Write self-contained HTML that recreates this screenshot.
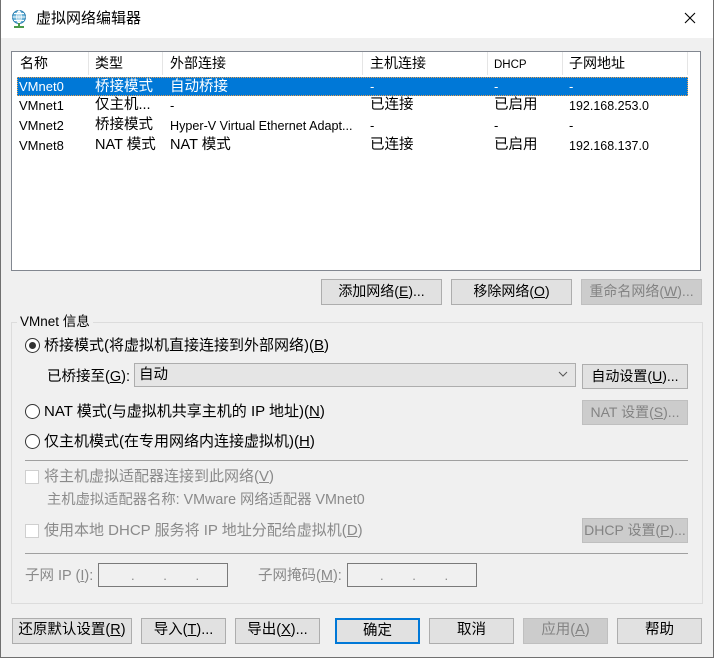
<!DOCTYPE html>
<html><head><meta charset="utf-8"><style>
*{box-sizing:border-box;margin:0;padding:0}
body{width:714px;height:658px;position:relative;overflow:hidden;background:#f0f0f0;font-family:"Liberation Sans","Noto Sans CJK SC",sans-serif;font-size:13px;color:#000}
.a{position:absolute;white-space:nowrap}
.btn{position:absolute;background:#e1e1e1;border:1px solid #adadad;text-align:center;font-size:13.5px;line-height:23px}
.dis{background:#cccccc;border-color:#bfbfbf;color:#838383}
.g{color:#8a8a8a}
.t{line-height:16px}
u{text-decoration:underline}
.radio{position:absolute;width:15px;height:15px;border:1px solid #333;border-radius:50%;background:#fff}
.chk{position:absolute;width:14px;height:14px;border:1px solid #cfcfcf;background:#fff}
.sep{position:absolute;height:1px;background:#a0a0a0}
</style></head><body>
<div class="a" style="left:0;top:0;width:714px;height:38px;background:#fff"></div>
<div class="a" style="left:0;top:0;width:1px;height:658px;background:#707070"></div>
<div class="a" style="right:0;top:0;width:1px;height:658px;background:#707070"></div>
<div class="a" style="left:0;bottom:0;width:714px;height:1px;background:#707070"></div>
<svg class="a" style="left:11px;top:10px" width="18" height="20" viewBox="0 0 18 20"><circle cx="8" cy="7" r="6.5" fill="#6fb5d8" stroke="#2d7fb0"/><path d="M1.5 7h13M8 .5v13M3 3.5h10M3 10.5h10M8 .5c-3 3-3 10 0 13M8 .5c3 3 3 10 0 13" stroke="#fff" fill="none" stroke-width="1"/><path d="M8 13v3M3 17h10" stroke="#4a9a4a" stroke-width="2"/></svg>
<div class="a" style="left:36px;top:10px;font-size:15px;line-height:18px">虚拟网络编辑器</div>
<svg class="a" style="left:684px;top:12px" width="12" height="12"><path d="M1 1L11 11M11 1L1 11" stroke="#000" stroke-width="1.1"/></svg>

<div class="a" style="left:11px;top:51px;width:690px;height:220px;background:#fff;border:1px solid #828790"></div>
<div class="a" style="left:88px;top:52px;width:1px;height:23px;background:#e5e5e5"></div>
<div class="a" style="left:162px;top:52px;width:1px;height:23px;background:#e5e5e5"></div>
<div class="a" style="left:362px;top:52px;width:1px;height:23px;background:#e5e5e5"></div>
<div class="a" style="left:487px;top:52px;width:1px;height:23px;background:#e5e5e5"></div>
<div class="a" style="left:562px;top:52px;width:1px;height:23px;background:#e5e5e5"></div>
<div class="a" style="left:687px;top:52px;width:1px;height:23px;background:#e5e5e5"></div>
<div class="a t" style="left:20px;top:55px;font-size:14px">名称</div>
<div class="a t" style="left:95px;top:55px;font-size:14px">类型</div>
<div class="a t" style="left:170px;top:55px;font-size:14px">外部连接</div>
<div class="a t" style="left:370px;top:55px;font-size:14px">主机连接</div>
<div class="a t" style="left:494px;top:57px;font-size:11.5px">DHCP</div>
<div class="a t" style="left:569px;top:55px;font-size:14px">子网地址</div>
<div class="a" style="left:17px;top:77px;width:671px;height:19px;background:#0078d7;border:1px dotted #e8a050"></div>
<div class="a t" style="left:19px;top:79px;color:#fff">VMnet0</div><div class="a t" style="left:95px;top:79px;color:#fff;font-size:14.5px">桥接模式</div><div class="a t" style="left:170px;top:79px;color:#fff;font-size:14.5px">自动桥接</div><div class="a t" style="left:370px;top:79px;color:#fff">-</div><div class="a t" style="left:494px;top:79px;color:#fff">-</div><div class="a t" style="left:569px;top:79px;color:#fff">-</div>
<div class="a t" style="left:19px;top:98px">VMnet1</div><div class="a t" style="left:95px;top:97px;font-size:14.5px">仅主机...</div><div class="a t" style="left:170px;top:98px">-</div><div class="a t" style="left:370px;top:97px;font-size:14.5px">已连接</div><div class="a t" style="left:494px;top:97px;font-size:14.5px">已启用</div><div class="a t" style="left:569px;top:98px;font-size:12.5px">192.168.253.0</div>
<div class="a t" style="left:19px;top:118px">VMnet2</div><div class="a t" style="left:95px;top:117px;font-size:14.5px">桥接模式</div><div class="a t" style="left:170px;top:118px;font-size:12.6px">Hyper-V Virtual Ethernet Adapt...</div><div class="a t" style="left:370px;top:118px">-</div><div class="a t" style="left:494px;top:118px">-</div><div class="a t" style="left:569px;top:118px">-</div>
<div class="a t" style="left:19px;top:138px">VMnet8</div><div class="a t" style="left:95px;top:137px;font-size:14.5px">NAT 模式</div><div class="a t" style="left:170px;top:137px;font-size:14.5px">NAT 模式</div><div class="a t" style="left:370px;top:137px;font-size:14.5px">已连接</div><div class="a t" style="left:494px;top:137px;font-size:14.5px">已启用</div><div class="a t" style="left:569px;top:138px;font-size:12.5px">192.168.137.0</div>

<div class="btn" style="left:321px;top:279px;width:121px;height:26px;font-size:14px">添加网络(<u>E</u>)...</div>
<div class="btn" style="left:451px;top:279px;width:121px;height:26px;font-size:14px">移除网络(<u>O</u>)</div>
<div class="btn dis" style="left:581px;top:279px;width:121px;height:26px;font-size:14px">重命名网络(<u>W</u>)...</div>

<div class="a" style="left:11px;top:322px;width:692px;height:282px;border:1px solid #dcdcdc"></div>
<div class="a t" style="left:17px;top:314px;background:#f0f0f0;padding:0 3px;font-size:13.5px">VMnet 信息</div>
<div class="radio" style="left:25px;top:338px"></div><div class="a" style="left:29px;top:342px;width:7px;height:7px;border-radius:50%;background:#333"></div>
<div class="a t" style="left:44px;top:338px;font-size:15px">桥接模式(将虚拟机直接连接到外部网络)(<u>B</u>)</div>
<div class="a t" style="left:47px;top:369px;font-size:14.5px">已桥接至(<u>G</u>):</div>
<div class="a" style="left:134px;top:363px;width:442px;height:24px;background:#e5e5e5;border:1px solid #adadad"></div>
<div class="a t" style="left:139px;top:367px;font-size:14.5px">自动</div>
<svg class="a" style="left:558px;top:371px" width="10" height="6"><path d="M1 1l4 4 4-4" stroke="#555" fill="none"/></svg>
<div class="btn" style="left:582px;top:364px;width:106px;height:25px;font-size:14px">自动设置(<u>U</u>)...</div>
<div class="radio" style="left:25px;top:404px"></div>
<div class="a t" style="left:44px;top:404px;font-size:15px">NAT 模式(与虚拟机共享主机的 IP 地址)(<u>N</u>)</div>
<div class="btn dis" style="left:582px;top:400px;width:106px;height:25px;font-size:14px">NAT 设置(<u>S</u>)...</div>
<div class="radio" style="left:25px;top:434px"></div>
<div class="a t" style="left:44px;top:434px;font-size:15px">仅主机模式(在专用网络内连接虚拟机)(<u>H</u>)</div>
<div class="sep" style="left:25px;top:460px;width:663px"></div>
<div class="chk" style="left:25px;top:470px"></div>
<div class="a t g" style="left:44px;top:469px;font-size:15px">将主机虚拟适配器连接到此网络(<u>V</u>)</div>
<div class="a t g" style="left:47px;top:492px;font-size:14.3px">主机虚拟适配器名称: VMware 网络适配器 VMnet0</div>
<div class="chk" style="left:25px;top:524px"></div>
<div class="a t g" style="left:44px;top:523px;font-size:15px">使用本地 DHCP 服务将 IP 地址分配给虚拟机(<u>D</u>)</div>
<div class="btn dis" style="left:582px;top:518px;width:106px;height:25px;font-size:14px">DHCP 设置(<u>P</u>)...</div>
<div class="sep" style="left:25px;top:553px;width:663px"></div>
<div class="a t g" style="left:25px;top:568px;font-size:14.5px">子网 IP (<u>I</u>):</div>
<div class="a" style="left:98px;top:563px;width:130px;height:24px;background:#f0f0f0;border:1px solid #7a7a7a"></div>
<div class="a g" style="left:131px;top:568px;word-spacing:25px">. . .</div>
<div class="a t g" style="left:258px;top:568px;font-size:14.5px">子网掩码(<u>M</u>):</div>
<div class="a" style="left:347px;top:563px;width:130px;height:24px;background:#f0f0f0;border:1px solid #7a7a7a"></div>
<div class="a g" style="left:380px;top:568px;word-spacing:25px">. . .</div>

<div class="btn" style="left:12px;top:618px;width:120px;height:26px;font-size:14.5px">还原默认设置(<u>R</u>)</div>
<div class="btn" style="left:141px;top:618px;width:85px;height:26px;font-size:14.5px">导入(<u>T</u>)...</div>
<div class="btn" style="left:235px;top:618px;width:85px;height:26px;font-size:14.5px">导出(<u>X</u>)...</div>
<div class="btn" style="left:335px;top:618px;width:85px;height:26px;border:2px solid #0078d7;line-height:22px;font-size:14.5px">确定</div>
<div class="btn" style="left:429px;top:618px;width:85px;height:26px;font-size:14.5px">取消</div>
<div class="btn dis" style="left:523px;top:618px;width:85px;height:26px;font-size:14.5px">应用(<u>A</u>)</div>
<div class="btn" style="left:617px;top:618px;width:85px;height:26px;font-size:14.5px">帮助</div>
</body></html>
